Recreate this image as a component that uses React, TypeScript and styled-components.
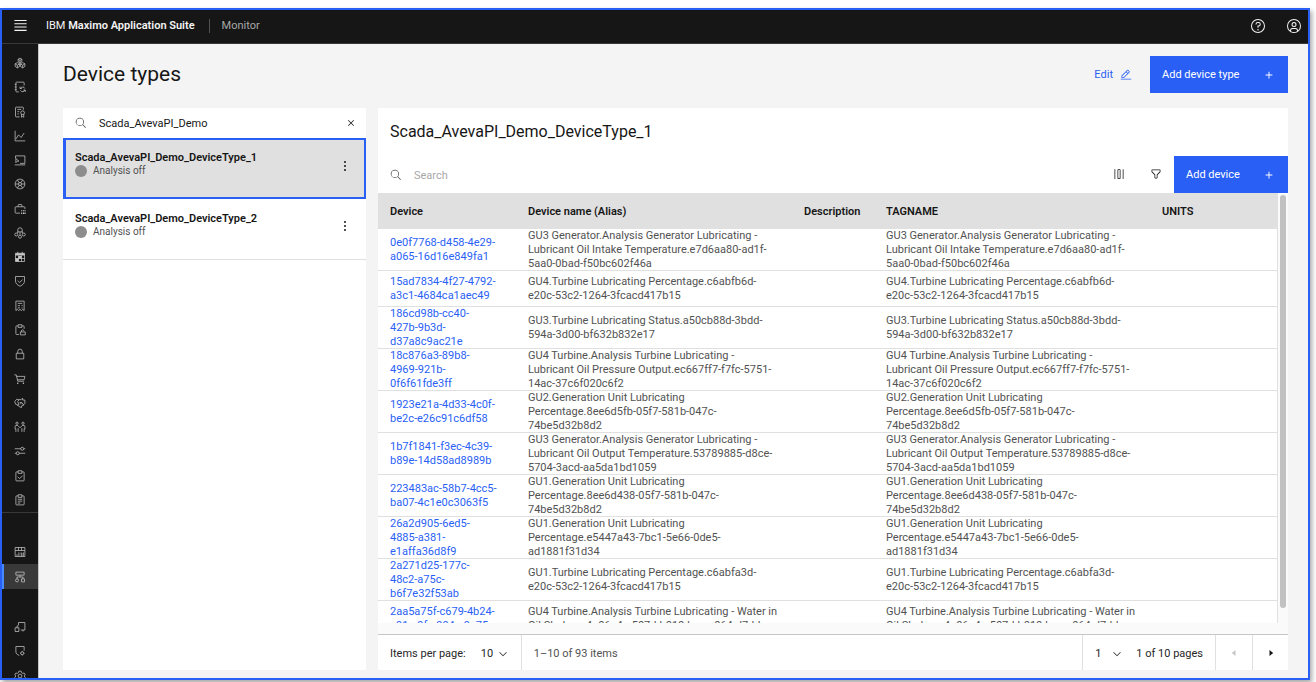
import React from "react";
import styled, { createGlobalStyle, css } from "styled-components";

const GlobalStyle = createGlobalStyle`
  *, *::before, *::after { box-sizing: border-box; }
  body {
    margin: 0;
    background: #ffffff;
    color: #161616;
    font-family: Roboto, "Open Sans", sans-serif;
    font-size: 11px;
    line-height: 14px;
  }
  button, input, select { font: inherit; color: inherit; }
  button { cursor: pointer; }
`;

/* ---------- icons ---------- */

const Svg = styled.svg<{ $size?: number }>`
  display: block;
  flex: none;
  width: ${(p) => p.$size ?? 12}px;
  height: ${(p) => p.$size ?? 12}px;
  fill: currentColor;
`;

const LineSvg = styled(Svg)`
  fill: none;
  stroke: currentColor;
  stroke-width: 2;
`;

const glyphs = {
  search:
    "M29 27.586l-7.552-7.552a11.018 11.018 0 1 0-1.414 1.414L27.586 29ZM4 13a9 9 0 1 1 9 9A9.01 9.01 0 0 1 4 13Z",
  close:
    "M24 9.4L22.6 8 16 14.6 9.4 8 8 9.4 14.6 16 8 22.6 9.4 24 16 17.4 22.6 24 24 22.6 17.4 16 24 9.4z",
  edit:
    "M2 26H30V28H2zM25.4 9c.8-.8.8-2 0-2.8l-3.6-3.6c-.8-.8-2-.8-2.8 0l-15 15V24h6.4L25.4 9zM20.4 4L24 7.6l-3 3L17.4 7 20.4 4zM6 22v-3.6l10-10 3.6 3.6-10 10H6z",
  filter:
    "M18 28H14a2 2 0 0 1-2-2V18.41L4.59 11A2 2 0 0 1 4 9.59V6A2 2 0 0 1 6 4H26a2 2 0 0 1 2 2V9.59A2 2 0 0 1 27.41 11L20 18.41V26A2 2 0 0 1 18 28ZM6 6V9.59l8 8V26h4V17.59l8-8V6Z",
  add: "M17.250 14.750V7H14.750V14.750H7V17.250H14.750V25H17.250V17.250H25V14.750z",
  chevron: "M16 22L6 12 7.4 10.6 16 19.2 24.6 10.6 26 12z",
  caretLeft: "M20 24L10 16 20 8z",
  caretRight: "M12 8L22 16 12 24z",
  columns: "M4 3H6V29H4zM26 3H28V29H26zM18 29H14a2 2 0 0 1-2-2V5a2 2 0 0 1 2-2H18a2 2 0 0 1 2 2V27A2 2 0 0 1 18 29ZM14 5V27H18V5Z",
  menu: "M3 4H29V6.500H3zM3 11H29V13.500H3zM3 18H29V20.500H3zM3 25H29V27.500H3z",
  help:
    "M16 2A14 14 0 1 0 30 16 14 14 0 0 0 16 2Zm0 26A12 12 0 1 1 28 16 12 12 0 0 1 16 28ZM17 8H15.5A4.49 4.49 0 0 0 11 12.5V13h2v-.5A2.5 2.5 0 0 1 15.5 10H17a2.5 2.5 0 0 1 0 5H15v4.5h2V17a4.5 4.5 0 0 0 0-9ZM16 22a1.5 1.5 0 1 0 0 3a1.5 1.5 0 0 0 0-3Z",
  user:
    "M16 8a5 5 0 1 0 5 5A5 5 0 0 0 16 8Zm0 8a3 3 0 1 1 3-3A3 3 0 0 1 16 16ZM16 2A14 14 0 1 0 30 16 14.016 14.016 0 0 0 16 2ZM10 26.377V25A3 3 0 0 1 13 22h6a3 3 0 0 1 3 3v1.377a11.9 11.9 0 0 1-12 0Zm13.993-1.451A5 5 0 0 0 19 20H13a5 5 0 0 0-4.993 4.926 12 12 0 1 1 15.985 0Z",
  overflow:
    "M16 6a2 2 0 1 0 0 4a2 2 0 0 0 0-4ZM16 14a2 2 0 1 0 0 4a2 2 0 0 0 0-4ZM16 22a2 2 0 1 0 0 4a2 2 0 0 0 0-4Z",
};

const Glyph = ({ name, size }: { name: keyof typeof glyphs; size?: number }) => (
  <Svg $size={size} viewBox="0 0 32 32" aria-hidden="true">
    <path d={glyphs[name]} />
  </Svg>
);

type NavEntry = { label: string; d: string; solid?: string };

const primaryNav: NavEntry[] = [
  {
    label: "Assets",
    d: "M16 3l5 3v6l-5 3-5-3V6zM11 6l5 3 5-3M16 9v6M9 15l6 3v7l-6 4-6-4v-7zM3 18l6 4 6-4M9 22v7M23 15l6 3v7l-6 4-6-4v-7zM17 18l6 4 6-4M23 22v7",
  },
  {
    label: "Inventory sync",
    d: "M27 12V5a2 2 0 0 0-2-2H7a2 2 0 0 0-2 2v22a2 2 0 0 0 2 2h6M2 9h5M2 16h5M2 23h5M16 15v5h5M30 29v-5h-5M17 20a6.500 6.500 0 0 1 12 0M29 24a6.500 6.500 0 0 1-12 1",
  },
  {
    label: "Certificates",
    d: "M25 10V5a2 2 0 0 0-2-2H6a2 2 0 0 0-2 2v22a2 2 0 0 0 2 2h9M9 9h10M9 15h5M9 21h4M23 13a5 5 0 1 0 0 10a5 5 0 0 0 0-10M20 22v8l3-2 3 2v-8",
  },
  { label: "Analytics", d: "M3 2v27h27M5 24l7-11 7 7 8-12" },
  {
    label: "Sessions",
    d: "M4 12V5h25v20H16M2 29h28M5 12l8 7H9l-4 4z",
  },
  {
    label: "Network",
    d: "M16 3a13 13 0 1 0 0 26a13 13 0 0 0 0-26M16 12a4 4 0 1 0 0 8a4 4 0 0 0 0-8M3 16h9M20 16h9M9 5l5 8M23 5l-5 8M9 27l5-8M23 27l-5-8",
  },
  {
    label: "Tools",
    d: "M16 27H5a2 2 0 0 1-2-2V12a2 2 0 0 1 2-2h22a2 2 0 0 1 2 2v4M11 10V6a2 2 0 0 1 2-2h6a2 2 0 0 1 2 2v4",
    solid: "M19 19h3v3h-3zM24 19h3v3h-3zM28 19h3v3h-3zM19 25h3v4h-3zM24 25h3v4h-3zM28 25h3v4h-3z",
  },
  {
    label: "Crew",
    d: "M16 2a6 6 0 0 0-6 6v5h12V8a6 6 0 0 0-6-6M16 13v8M6 16a4 4 0 1 0 0 8a4 4 0 0 0 0-8M26 16a4 4 0 1 0 0 8a4 4 0 0 0 0-8M16 22a4 4 0 1 0 0 8a4 4 0 0 0 0-8M8 16l4-3M24 16l-4-3",
  },
  {
    label: "Calendar",
    d: "M4 6h24v22H4zM10 2v6M22 2v6M4 20h24M12 12v16M20 12v16",
    solid: "M4 6h24v6H4zM12 13h8v7h-8zM4 20h8v8H4z",
  },
  { label: "Safety", d: "M4 4h24v12c0 6-4 10-12 14C8 26 4 22 4 16zM10 15l5 5 8-8" },
  {
    label: "Receipts",
    d: "M5 3h22v25l-4-3-3 3-4-3-4 3-3-3-4 3zM10 9h12M10 15h6M20 15h3M10 21h6M20 21h3",
  },
  {
    label: "Work orders",
    d: "M13 28H7a2 2 0 0 1-2-2V7a2 2 0 0 1 2-2h4M21 5h4a2 2 0 0 1 2 2v6M11 2h10v7H11zM17 21h13v8H17zM20 21v-2a3 3 0 0 1 6-1",
  },
  { label: "Security", d: "M6 14h20v15H6zM10 14V9a6 6 0 0 1 12 0v5" },
  {
    label: "Purchasing",
    d: "M1 5h5l4 17h17M7 9h22l-2 9H9",
    solid: "M10 25a2 2 0 1 0 0 4a2 2 0 0 0 0-4ZM25 25a2 2 0 1 0 0 4a2 2 0 0 0 0-4Z",
  },
  {
    label: "Contracts",
    d: "M12 7l-5-1-5 6 2 7 5 1M8 12l4 3 1 6-5 1M12 7h7l4-4v5h6v9l-4 4-4-6h-6M13 7l-2 4M20 15l-3 4M9 21l5 5 6 2v-4l7-3",
  },
  {
    label: "People",
    d: "M8 3a3 3 0 1 0 0 6a3 3 0 0 0 0-6M24 3a3 3 0 1 0 0 6a3 3 0 0 0 0-6M5 29v-8H3v-7a2 2 0 0 1 2-2h5l6 6 6-6h5a2 2 0 0 1 2 2v7h-2v8M11 29v-10M21 29v-10",
  },
  {
    label: "Settings",
    d: "M2 10h16M26 10h4M22 6a4 4 0 1 0 0 8a4 4 0 0 0 0-8M2 22h4M14 22h16M10 18a4 4 0 1 0 0 8a4 4 0 0 0 0-8",
  },
  {
    label: "Inspections",
    d: "M11 5H7a2 2 0 0 0-2 2v20a2 2 0 0 0 2 2h18a2 2 0 0 0 2-2V7a2 2 0 0 0-2-2h-4M11 2h10v7H11zM10 18l5 5 8-8",
  },
  {
    label: "Plans",
    d: "M11 5H7a2 2 0 0 0-2 2v20a2 2 0 0 0 2 2h18a2 2 0 0 0 2-2V7a2 2 0 0 0-2-2h-4M11 2h10v7H11zM10 14h12M10 19h12M10 24h7",
  },
];

const monitorNav: NavEntry[] = [
  {
    label: "Dashboards",
    d: "M3 4h26v24H3zM3 12h26M12 4v8M20 4v8M8 27v-5M13 27V17M17 19h4v8M25 27V17M17 24h4",
  },
  {
    label: "Device types",
    d: "M5 3h22v8H5zM16 11v5M8 21v-5h16v5M8 21a4 4 0 1 0 0 8a4 4 0 0 0 0-8M20 21h8v8h-8z",
  },
];

const adminNav: NavEntry[] = [
  { label: "Integrations", d: "M12 11V4h17v20H18M3 18h10v10H3zM24 24v4M8 18v-5h4" },
  {
    label: "Certificates and trust",
    d: "M27 15V4H5v14c0 5 3 7 9 10M22 18a4 4 0 1 0 0 8a4 4 0 0 0 0-8M22 16v2M22 26v2M16 22h2M26 22h2",
  },
  {
    label: "Administration",
    d: "M13 3h6l1 4 3 2 4-1 3 5-3 3 3 4-3 5-4-2-3 2-1 4h-6l-1-4-3-2-4 2-3-5 3-4-3-3 3-5 4 1 3-2zM16 11a5 5 0 1 0 0 10a5 5 0 0 0 0-10",
  },
];

/* ---------- shell ---------- */

const Frame = styled.div`
  display: flex;
  flex-direction: column;
  height: calc(100vh - 10px);
  margin: 8px 6px 2px 0;
  border: 2px solid #2a5ff5;
  background: #f4f4f4;
  box-shadow: 2px 3px 5px rgba(0, 0, 0, 0.35);
  overflow: hidden;
`;

const Header = styled.header`
  display: flex;
  flex: none;
  align-items: center;
  height: 34px;
  padding: 0 6px 2px 11px;
  border-bottom: 1px solid #393939;
  background: #161616;
  color: #f4f4f4;
`;

const IconButton = styled.button<{ $size?: number }>`
  display: flex;
  flex: none;
  align-items: center;
  justify-content: center;
  width: ${(p) => p.$size ?? 24}px;
  height: ${(p) => p.$size ?? 24}px;
  padding: 0;
  border: 0;
  background: none;

  &:disabled {
    color: #c6c6c6;
    cursor: default;
  }
`;

const Brand = styled.a`
  margin-left: 18px;
  padding-right: 14px;
  border-right: 1px solid #525252;
  color: inherit;
  text-decoration: none;

  b { font-weight: 600; }
`;

const Product = styled.span`
  margin-left: 12px;
  color: #a8a8a8;
`;

const HeaderActions = styled.div`
  display: flex;
  gap: 20px;
  margin-left: auto;
`;

const Body = styled.div`
  display: flex;
  flex: 1;
  min-height: 0;
`;

const Sidebar = styled.nav`
  display: flex;
  flex: none;
  flex-direction: column;
  gap: 26px;
  width: 37px;
  padding-top: 7px;
  border-right: 1px solid #c6c6c6;
  background: #161616;
  overflow: hidden;
`;

const NavGroup = styled.ul<{ $height: number; $divider?: boolean }>`
  display: grid;
  flex: none;
  grid-auto-rows: 1fr;
  height: ${(p) => p.$height}px;
  margin: 0;
  padding: 0;
  list-style: none;
  ${(p) => p.$divider && css`border-bottom: 1px solid #393939;`}
`;

const NavLink = styled.a<{ $active?: boolean }>`
  display: flex;
  align-items: center;
  justify-content: center;
  height: 100%;
  border-left: 2px solid ${(p) => (p.$active ? "#4589ff" : "transparent")};
  padding-right: 2px;
  background: ${(p) => (p.$active ? "#393939" : "transparent")};
  color: #c6c6c6;
`;

const Main = styled.main`
  display: flex;
  flex: 1;
  flex-direction: column;
  min-width: 0;
  padding: 12px 20px 8px 24px;
`;

const PageHead = styled.div`
  display: flex;
  flex: none;
  align-items: center;
  height: 37px;
  margin-bottom: 15px;
`;

const PageTitle = styled.h1`
  margin: 0 auto 0 0;
  padding-bottom: 2px;
  font-size: 21px;
  line-height: 28px;
  font-weight: 400;
`;

const GhostButton = styled.button`
  display: flex;
  align-items: center;
  gap: 7px;
  height: 37px;
  padding: 0 18px;
  border: 0;
  background: none;
  color: #2a5ff5;
`;

const PrimaryButton = styled.button<{ $width: number }>`
  display: flex;
  align-items: center;
  justify-content: space-between;
  width: ${(p) => p.$width}px;
  height: 37px;
  padding: 0 13px 0 12px;
  border: 0;
  background: #2a5ff5;
  color: #ffffff;
`;

const Panels = styled.div`
  display: grid;
  flex: 1;
  grid-template-columns: 303px minmax(0, 1fr);
  gap: 12px;
  min-height: 0;
`;

const Panel = styled.section`
  display: flex;
  flex-direction: column;
  min-width: 0;
  min-height: 0;
  background: #ffffff;
`;

/* ---------- device type list ---------- */

const SearchField = styled.label<{ $height: number }>`
  display: flex;
  flex: 1;
  align-items: center;
  gap: 12px;
  height: ${(p) => p.$height}px;
  padding-left: 12px;
  color: #525252;
`;

const SearchInput = styled.input`
  flex: 1;
  min-width: 0;
  padding: 2px 0 0;
  border: 0;
  outline: 0;
  background: none;
  color: #161616;

  &::placeholder { color: #a8a8a8; opacity: 1; }
`;

const ListSearch = styled.div`
  display: flex;
  flex: none;
  align-items: center;
  height: 30px;
  padding-right: 3px;
`;

const TypeList = styled.ul`
  margin: 0;
  padding: 0;
  list-style: none;
`;

const TypeItem = styled.li<{ $selected?: boolean }>`
  display: flex;
  align-items: center;
  height: 61px;
  padding: 0 9px 6px 12px;
  border-bottom: 1px solid #e0e0e0;
  ${(p) =>
    p.$selected &&
    css`
      padding: 0 7px 6px 9px;
      border: 2px solid #2a5ff5;
      border-left-width: 3px;
      background: #e0e0e0;
    `}
`;

const TypeText = styled.div`
  flex: 1;
  min-width: 0;
  padding-bottom: 3px;
`;

const TypeName = styled.div`
  font-weight: 600;
`;

const Status = styled.div`
  display: flex;
  align-items: center;
  gap: 6px;
  font-size: 10px;
  line-height: 12px;
  color: #525252;

  &::before {
    content: "";
    width: 12px;
    height: 12px;
    border-radius: 50%;
    background: #8d8d8d;
  }
`;

/* ---------- device table ---------- */

const PanelTitle = styled.h2`
  flex: none;
  margin: 0;
  padding: 13px 12px;
  font-size: 16px;
  line-height: 22px;
  font-weight: 400;
`;

const Toolbar = styled.div`
  display: flex;
  flex: none;
  height: 37px;
`;

const ToolButton = styled(IconButton)`
  width: 37px;
  height: 35px;
`;

const TableArea = styled.div`
  display: flex;
  flex: 1;
  min-height: 0;
  padding-bottom: 11px;
  background: #fafafa;
`;

const TableClip = styled.div`
  flex: 1;
  min-width: 0;
  border-right: 1px solid #e0e0e0;
  background: #ffffff;
  overflow: hidden;
`;

const ScrollTrack = styled.div`
  flex: none;
  width: 10px;
  padding: 2px;
`;

const ScrollThumb = styled.div`
  height: 97%;
  border-radius: 3px;
  background: #c1c1c1;
`;

const Table = styled.table`
  width: 100%;
  table-layout: fixed;
  border-collapse: separate;
  border-spacing: 0;
`;

const Col = styled.col<{ $width?: number }>`
  ${(p) => p.$width && css`width: ${p.$width}px;`}
`;

const Th = styled.th`
  height: 36px;
  padding: 2px 0 0 12px;
  background: #e0e0e0;
  font-weight: 600;
  text-align: left;
  white-space: nowrap;
`;

const Td = styled.td<{ $tall?: boolean }>`
  height: ${(p) => (p.$tall ? 42 : 36)}px;
  padding: 0 0 0 12px;
  box-shadow: inset 0 -1px #e0e0e0;
  color: #525252;
  vertical-align: middle;
  white-space: pre;
`;

const DeviceLink = styled.a`
  color: #2a5ff5;
  text-decoration: none;
`;

const Pagination = styled.div`
  display: flex;
  flex: none;
  align-items: stretch;
  height: 36px;
  border-top: 1px solid #c6c6c6;
`;

const PageCell = styled.div<{ $grow?: boolean }>`
  display: flex;
  align-items: center;
  padding: 2px 12px 0;
  border-right: 1px solid #e0e0e0;
  color: ${(p) => (p.$grow ? "#525252" : "#262626")};
  ${(p) => p.$grow && css`flex: 1;`}
`;

const PageLabel = styled.label`
  display: flex;
  align-items: center;
  gap: 15px;
`;

const SelectBox = styled.span<{ $width: number }>`
  display: grid;
  align-items: center;
  width: ${(p) => p.$width}px;

  & > * { grid-area: 1 / 1; }
  & > svg { justify-self: end; pointer-events: none; }
`;

const Select = styled.select`
  width: 100%;
  padding: 0;
  border: 0;
  outline: 0;
  appearance: none;
  background: none;
`;

const PageCount = styled.span`
  margin-left: 13px;
`;

const PageButton = styled(IconButton)`
  width: 36px;
  height: 35px;

  & + & { border-left: 1px solid #e0e0e0; }
`;

type Device = { id: string; name: string };

const devices: Device[] = [
  {
    id: "0e0f7768-d458-4e29-\na065-16d16e849fa1",
    name: "GU3 Generator.Analysis Generator Lubricating -\nLubricant Oil Intake Temperature.e7d6aa80-ad1f-\n5aa0-0bad-f50bc602f46a",
  },
  {
    id: "15ad7834-4f27-4792-\na3c1-4684ca1aec49",
    name: "GU4.Turbine Lubricating Percentage.c6abfb6d-\ne20c-53c2-1264-3fcacd417b15",
  },
  {
    id: "186cd98b-cc40-\n427b-9b3d-\nd37a8c9ac21e",
    name: "GU3.Turbine Lubricating Status.a50cb88d-3bdd-\n594a-3d00-bf632b832e17",
  },
  {
    id: "18c876a3-89b8-\n4969-921b-\n0f6f61fde3ff",
    name: "GU4 Turbine.Analysis Turbine Lubricating -\nLubricant Oil Pressure Output.ec667ff7-f7fc-5751-\n14ac-37c6f020c6f2",
  },
  {
    id: "1923e21a-4d33-4c0f-\nbe2c-e26c91c6df58",
    name: "GU2.Generation Unit Lubricating\nPercentage.8ee6d5fb-05f7-581b-047c-\n74be5d32b8d2",
  },
  {
    id: "1b7f1841-f3ec-4c39-\nb89e-14d58ad8989b",
    name: "GU3 Generator.Analysis Generator Lubricating -\nLubricant Oil Output Temperature.53789885-d8ce-\n5704-3acd-aa5da1bd1059",
  },
  {
    id: "223483ac-58b7-4cc5-\nba07-4c1e0c3063f5",
    name: "GU1.Generation Unit Lubricating\nPercentage.8ee6d438-05f7-581b-047c-\n74be5d32b8d2",
  },
  {
    id: "26a2d905-6ed5-\n4885-a381-\ne1affa36d8f9",
    name: "GU1.Generation Unit Lubricating\nPercentage.e5447a43-7bc1-5e66-0de5-\nad1881f31d34",
  },
  {
    id: "2a271d25-177c-\n48c2-a75c-\nb6f7e32f53ab",
    name: "GU1.Turbine Lubricating Percentage.c6abfa3d-\ne20c-53c2-1264-3fcacd417b15",
  },
  {
    id: "2aa5a75f-c679-4b24-\na91e-9fa-994e-9a75",
    name: "GU4 Turbine.Analysis Turbine Lubricating - Water in\nOil Sludge.a4a06a4a-507d-b010-bea-e064-d7dd",
  },
];

const lineCount = (d: Device) =>
  Math.max(d.id.split("\n").length, d.name.split("\n").length);

const NavItems = ({ items, current }: { items: NavEntry[]; current?: string }) => (
  <>
    {items.map((item) => (
      <li key={item.label}>
        <NavLink
          href="#"
          aria-label={item.label}
          aria-current={item.label === current ? "page" : undefined}
          $active={item.label === current}
        >
          <LineSvg viewBox="0 0 32 32" aria-hidden="true">
            <path d={item.d} />
            {item.solid && <path d={item.solid} fill="currentColor" stroke="none" />}
          </LineSvg>
        </NavLink>
      </li>
    ))}
  </>
);

const DeviceTypeRow = ({ name, selected }: { name: string; selected?: boolean }) => (
  <TypeItem $selected={selected}>
    <TypeText>
      <TypeName>{name}</TypeName>
      <Status>Analysis off</Status>
    </TypeText>
    <IconButton type="button" aria-label={`Actions for ${name}`}>
      <Glyph name="overflow" size={16} />
    </IconButton>
  </TypeItem>
);

export default function App() {
  return (
    <>
      <GlobalStyle />
      <Frame>
        <Header>
          <IconButton type="button" aria-label="Menu" $size={15}>
            <Glyph name="menu" size={15} />
          </IconButton>
          <Brand href="#">
            IBM <b>Maximo Application Suite</b>
          </Brand>
          <Product>Monitor</Product>
          <HeaderActions>
            <IconButton type="button" aria-label="Help" $size={16}>
              <Glyph name="help" size={16} />
            </IconButton>
            <IconButton type="button" aria-label="Account" $size={16}>
              <Glyph name="user" size={16} />
            </IconButton>
          </HeaderActions>
        </Header>
        <Body>
          <Sidebar aria-label="Applications">
            <NavGroup $height={462} $divider>
              <NavItems items={primaryNav} />
            </NavGroup>
            <NavGroup $height={50}>
              <NavItems items={monitorNav} current="Device types" />
            </NavGroup>
            <NavGroup $height={73}>
              <NavItems items={adminNav} />
            </NavGroup>
          </Sidebar>
          <Main>
            <PageHead>
              <PageTitle>Device types</PageTitle>
              <GhostButton type="button">
                Edit
                <Glyph name="edit" />
              </GhostButton>
              <PrimaryButton type="button" $width={138}>
                Add device type
                <Glyph name="add" />
              </PrimaryButton>
            </PageHead>
            <Panels>
              <Panel aria-label="Device types">
                <ListSearch>
                  <SearchField $height={30}>
                    <Glyph name="search" />
                    <SearchInput
                      type="text"
                      aria-label="Search device types"
                      defaultValue="Scada_AvevaPI_Demo"
                    />
                  </SearchField>
                  <IconButton type="button" aria-label="Clear search">
                    <Glyph name="close" />
                  </IconButton>
                </ListSearch>
                <TypeList>
                  <DeviceTypeRow name="Scada_AvevaPI_Demo_DeviceType_1" selected />
                  <DeviceTypeRow name="Scada_AvevaPI_Demo_DeviceType_2" />
                </TypeList>
              </Panel>
              <Panel aria-label="Devices">
                <PanelTitle>Scada_AvevaPI_Demo_DeviceType_1</PanelTitle>
                <Toolbar>
                  <SearchField $height={37}>
                    <Glyph name="search" />
                    <SearchInput type="text" aria-label="Search devices" placeholder="Search" />
                  </SearchField>
                  <ToolButton type="button" aria-label="Columns">
                    <Glyph name="columns" />
                  </ToolButton>
                  <ToolButton type="button" aria-label="Filter">
                    <Glyph name="filter" />
                  </ToolButton>
                  <PrimaryButton type="button" $width={114}>
                    Add device
                    <Glyph name="add" />
                  </PrimaryButton>
                </Toolbar>
                <TableArea>
                  <TableClip>
                    <Table>
                      <colgroup>
                        <Col $width={138} />
                        <Col $width={276} />
                        <Col $width={82} />
                        <Col $width={276} />
                        <Col />
                      </colgroup>
                      <thead>
                        <tr>
                          <Th>Device</Th>
                          <Th>Device name (Alias)</Th>
                          <Th>Description</Th>
                          <Th>TAGNAME</Th>
                          <Th>UNITS</Th>
                        </tr>
                      </thead>
                      <tbody>
                        {devices.map((d) => {
                          const tall = lineCount(d) > 2;
                          return (
                            <tr key={d.id}>
                              <Td $tall={tall}>
                                <DeviceLink href="#">{d.id}</DeviceLink>
                              </Td>
                              <Td $tall={tall}>{d.name}</Td>
                              <Td $tall={tall} />
                              <Td $tall={tall}>{d.name}</Td>
                              <Td $tall={tall} />
                            </tr>
                          );
                        })}
                      </tbody>
                    </Table>
                  </TableClip>
                  <ScrollTrack>
                    <ScrollThumb />
                  </ScrollTrack>
                </TableArea>
                <Pagination>
                  <PageCell>
                    <PageLabel>
                      Items per page:
                      <SelectBox $width={28}>
                        <Select defaultValue="10">
                          <option>10</option>
                          <option>20</option>
                        </Select>
                        <Glyph name="chevron" />
                      </SelectBox>
                    </PageLabel>
                  </PageCell>
                  <PageCell $grow>1–10 of 93 items</PageCell>
                  <PageCell>
                    <SelectBox $width={28}>
                      <Select aria-label="Page" defaultValue="1">
                        <option>1</option>
                        <option>2</option>
                      </Select>
                      <Glyph name="chevron" />
                    </SelectBox>
                    <PageCount>1 of 10 pages</PageCount>
                  </PageCell>
                  <PageButton type="button" aria-label="Previous page" disabled>
                    <Glyph name="caretLeft" />
                  </PageButton>
                  <PageButton type="button" aria-label="Next page">
                    <Glyph name="caretRight" />
                  </PageButton>
                </Pagination>
              </Panel>
            </Panels>
          </Main>
        </Body>
      </Frame>
    </>
  );
}
